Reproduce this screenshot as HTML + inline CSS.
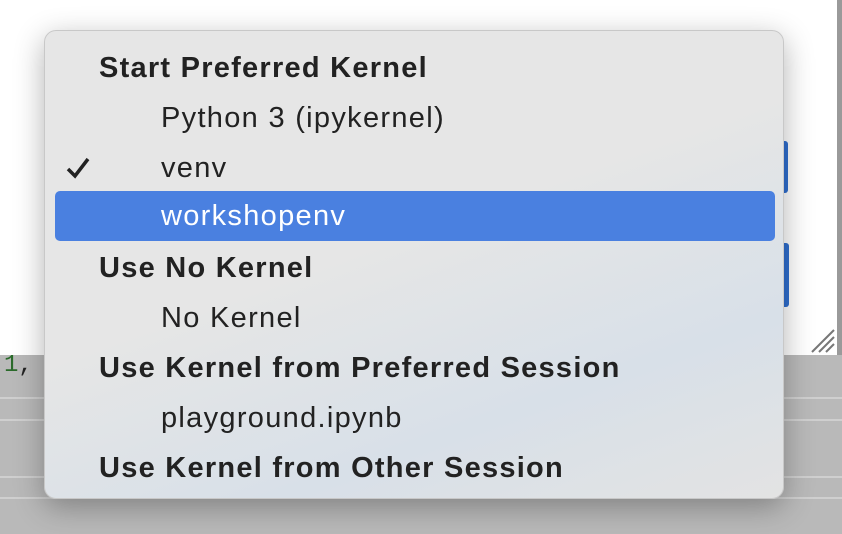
<!DOCTYPE html>
<html><head><style>
body{margin:0;width:842px;height:534px;overflow:hidden;position:relative;background:#b9b9b9;font-family:"Liberation Sans",sans-serif}
.dlg{position:absolute;left:0;top:0;width:837px;height:355px;background:#fff}
.strip{position:absolute;left:837px;top:0;width:5px;height:355px;background:#9a9a9a}
.line{position:absolute;left:0;width:842px;height:2px;background:#cfcfcf}
.bl{position:absolute;background:#2f6fd0;border-radius:3px}
.menu{position:absolute;left:44px;top:30px;width:740px;height:469px;border-radius:12px;background:linear-gradient(160deg,#e6e6e6 0%,#e6e6e6 45%,#d8e0e8 75%,#e3e3e3 100%);box-shadow:0 8px 30px rgba(0,0,0,.3);border:1px solid #c8c8c8;box-sizing:border-box}
.row{position:absolute;left:0;height:50px;line-height:50px;font-size:29px;letter-spacing:1.3px;color:#222;white-space:nowrap}
.h{left:54px;font-weight:bold;letter-spacing:1.25px}
.i{left:116px}
.hl{position:absolute;left:10px;top:160px;width:720px;height:50px;background:#4a80e0;border-radius:5px}
</style></head><body>
<div class="dlg"></div><div class="strip"></div>
<div class="line" style="top:397px"></div><div class="line" style="top:419px"></div><div class="line" style="top:476px"></div><div class="line" style="top:497px"></div>
<div class="bl" style="left:780px;top:141px;width:8px;height:52px"></div>
<div class="bl" style="left:780px;top:243px;width:9px;height:64px"></div>
<svg style="position:absolute;left:808px;top:328px" width="28" height="26"><g stroke="#777" stroke-width="2"><line x1="4" y1="24" x2="26" y2="2"/><line x1="11" y1="24" x2="26" y2="9"/><line x1="18" y1="24" x2="26" y2="16"/></g></svg>
<div style="position:absolute;left:4px;top:352px;font:24px 'Liberation Mono',monospace;color:#2a6a2a">1<span style="color:#222">,</span></div>
<div class="menu">
<div class="hl"></div>
<div class="row h" style="top:12px">Start Preferred Kernel</div>
<div class="row i" style="top:62px">Python 3 (ipykernel)</div>
<svg style="position:absolute;left:21px;top:126px" width="24" height="22"><path d="M2 12 L9 19 L22 2" stroke="#222" stroke-width="3.5" fill="none"/></svg>
<div class="row i" style="top:112px">venv</div>
<div class="row i" style="top:160px;color:#fff">workshopenv</div>
<div class="row h" style="top:212px">Use No Kernel</div>
<div class="row i" style="top:262px">No Kernel</div>
<div class="row h" style="top:312px">Use Kernel from Preferred Session</div>
<div class="row i" style="top:362px">playground.ipynb</div>
<div class="row h" style="top:412px">Use Kernel from Other Session</div>
</div>
</body></html>
